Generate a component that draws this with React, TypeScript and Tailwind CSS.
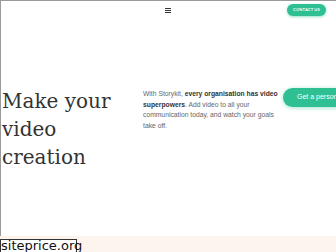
import React from "react";

export default function App() {
  return (
    <div className="w-[336px] h-[252px] overflow-hidden bg-white flex flex-col">
      <div className="h-[236px] shrink-0 border-t border-l border-[#9a9a9a] flex flex-col overflow-hidden">
        <header className="grid grid-cols-[1fr_auto_1fr] items-center h-[15px] mt-[1px] shrink-0">
          <div />
          <div className="flex flex-col gap-[1px] w-[6px] ml-[-2px] mt-[1px]">
            <span className="h-[1px] bg-[#333]" />
            <span className="h-[1px] bg-[#333]" />
            <span className="h-[1px] bg-[#333]" />
          </div>
          <div className="flex justify-end pr-[10px]">
            <button className="h-[12px] w-[39px] rounded-full bg-[#2ebf93] text-white text-[4px] font-bold tracking-[0.2px] shadow-[0_1px_3px_rgba(46,191,147,0.5)] flex items-center justify-center" style={{ fontFamily: "Lato, sans-serif" }}>
              CONTACT US
            </button>
          </div>
        </header>
        <section className="flex items-start mt-[70px]">
          <h1 className="w-[142px] shrink-0 pl-[1px] text-[20px] leading-[28px] text-[#333]" style={{ fontFamily: "'DejaVu Serif', serif" }}>
            Make your video creation
          </h1>
          <p className="w-[139px] shrink-0 mt-[2px] text-[6.75px] leading-[10.7px] text-[#666]" style={{ fontFamily: "'Liberation Sans', Arial, sans-serif" }}>
            With Storykit, <b className="text-[#333]">every organisation has video superpowers</b>. Add video to all your communication today, and watch your goals take off.
          </p>
          <button className="shrink-0 h-[19px] mt-[1px] ml-[1px] pl-[14px] pr-[20px] rounded-full bg-[#2ebf93] text-white text-[7px] whitespace-nowrap shadow-[0_1px_4px_rgba(46,191,147,0.45)]" style={{ fontFamily: "'Liberation Sans', Arial, sans-serif" }}>
            Get a personalised demo
          </button>
        </section>
      </div>
      <footer className="flex-1 min-h-0 bg-[#fdf4ee] pt-[3px]">
        <div className="w-[77px] h-[20px] border border-[#333] bg-white text-[13px] leading-[12px] text-[#111] whitespace-nowrap" style={{ fontFamily: "'DejaVu Sans', sans-serif" }}>
          siteprice.org
        </div>
      </footer>
    </div>
  );
}
